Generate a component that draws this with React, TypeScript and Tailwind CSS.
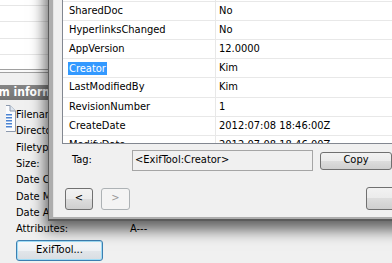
const rows = [
  { k: "SharedDoc", v: "No", h: "h-[19px]" },
  { k: "HyperlinksChanged", v: "No", h: "h-[19px]" },
  { k: "AppVersion", v: "12.0000", h: "h-[19px]" },
  { k: "Creator", v: "Kim", h: "h-[19px]", sel: true },
  { k: "LastModifiedBy", v: "Kim", h: "h-[20px]" },
  { k: "RevisionNumber", v: "1", h: "h-[19px]" },
  { k: "CreateDate", v: "2012:07:08 18:46:00Z", h: "h-[19px]" },
  { k: "ModifyDate", v: "2012:07:08 18:46:00Z", h: "h-[19px]" },
];

const infoRows = [
  { k: "Filename:", h: "h-[16px]" },
  { k: "Directory:", h: "h-[17px]" },
  { k: "Filetype:", h: "h-[16px]" },
  { k: "Size:", h: "h-[16px]" },
  { k: "Date Created:", h: "h-[17px]" },
  { k: "Date Modified:", h: "h-[16px]" },
  { k: "Date Accessed:", h: "h-[16px]" },
  { k: "Attributes:", h: "h-[16px]", v: "A---" },
];

function FileIcon() {
  return (
    <svg width="18" height="27" viewBox="0 0 18 27" className="shrink-0">
      <path d="M0.5 0.5 H12 L17.5 6 V26.5 H0.5 Z" fill="#fbfcfe" stroke="#8c99ad" />
      <path d="M12 0.5 V6 H17.5" fill="#dfe6f0" stroke="#8c99ad" />
      {[9, 12, 15, 18, 21].map((y) => (
        <rect key={y} x="3" y={y} width="11" height="1.5" fill="#4d84d1" />
      ))}
    </svg>
  );
}

function Btn({ children, className, disabled }: { children?: React.ReactNode; className: string; disabled?: boolean }) {
  return (
    <div
      className={
        "flex items-center justify-center rounded-[3px] border " +
        (disabled
          ? "border-[#adb2b5] bg-[#f4f4f4] text-[#9a9a9a] "
          : "border-[#707070] bg-[linear-gradient(#f2f2f2_0%,#ebebeb_50%,#dddddd_50%,#cfcfcf_100%)] text-black ") +
        className
      }
    >
      {children}
    </div>
  );
}

export default function App() {
  return (
    <div
      className="relative w-[392px] h-[263px] overflow-hidden bg-[#f0f0f0] text-[11px] text-black"
      style={{ fontFamily: '"DejaVu Sans Condensed", "DejaVu Sans", sans-serif' }}
    >
      {/* background properties window */}
      <div className="flex flex-col">
        <div className="h-[70px] bg-white border-b border-[#a0a0a0]">
          <div className="h-[6px] border-b border-[#e6e6e6]" />
          <div className="h-[16px] border-b border-[#e6e6e6]" />
          <div className="h-[17px] border-b border-[#e6e6e6]" />
          <div className="h-[16px] border-b border-[#e6e6e6]" />
        </div>
        <div className="h-[3px] bg-[#fafafa] border-b border-[#a0a0a0]" />
        <div className="h-[12px]" />
        <div className="h-[15px] bg-[linear-gradient(#858585,#747474)] overflow-hidden whitespace-nowrap">
          <span className="block -ml-[18px] text-[12px] leading-[15px] font-bold text-white">Item information</span>
        </div>
        <div className="flex">
          <div className="w-[16px] pt-[5px] flex justify-end">
            <div className="w-[10px] overflow-hidden flex justify-end">
              <FileIcon />
            </div>
          </div>
          <div className="flex flex-col pt-[7px]">
            {infoRows.map((r) => (
              <div key={r.k} className={"flex items-center whitespace-nowrap " + r.h}>
                <span className="w-[114px]">{r.k}</span>
                {r.v && <span>{r.v}</span>}
              </div>
            ))}
            <div className="mt-[3px] w-[87px] h-[21px] flex items-center justify-center rounded-[3px] border border-[#3c7fb1] shadow-[inset_0_0_0_1px_#9fdcf6] bg-[linear-gradient(#f7f9fb_0%,#eef1f4_50%,#e2e6ea_50%,#d8dde2_100%)]">
              ExifTool...
            </div>
          </div>
        </div>
      </div>

      {/* ExifTool tag dialog */}
      <div className="absolute left-[48px] top-[-20px] w-[360px] h-[241px] border-l border-b-2 border-[#5b5b5b] bg-[#adadad] pl-[4px] pb-[2px] shadow-[0_6px_14px_3px_rgba(0,0,0,0.6)]">
        <div className="h-full border-l border-[#e4e4e4] bg-[#f0f0f0] pl-[8px] pt-[15px] flex flex-col">
          <div className="h-[149px] border border-[#828790] bg-white overflow-hidden">
            <div className="h-[6px] border-b border-[#e8e8e8] flex">
              <div className="w-[153px] border-r border-[#e8e8e8]" />
            </div>
            {rows.map((r) => (
              <div key={r.k} className={"flex border-b border-[#e8e8e8] whitespace-nowrap " + r.h}>
                <div className="w-[153px] border-r border-[#e8e8e8] flex items-center pl-[5px]">
                  <span className={r.sel ? "bg-[#3399ff] text-white px-[1px] leading-[13px]" : "px-[1px]"}>{r.k}</span>
                </div>
                <div className="flex items-center pl-[3px]">{r.v}</div>
              </div>
            ))}
          </div>

          <div className="mt-[6px] flex items-center">
            <span className="w-[70px] pl-[10px]">Tag:</span>
            <div className="w-[181px] h-[21px] border border-[#a5a5a5] bg-[#f0f0f0] flex items-center pl-[2px] whitespace-nowrap">
              &lt;ExifTool:Creator&gt;
            </div>
            <Btn className="ml-[7px] w-[72px] h-[18px] shrink-0">Copy</Btn>
          </div>

          <div className="mt-[16px] flex items-center">
            <Btn className="ml-[3px] w-[28px] h-[22px] shrink-0">&lt;</Btn>
            <Btn disabled className="ml-[8px] w-[29px] h-[22px] shrink-0">&gt;</Btn>
            <Btn className="ml-[236px] w-[75px] h-[23px] shrink-0" />
          </div>
        </div>
      </div>
    </div>
  );
}
